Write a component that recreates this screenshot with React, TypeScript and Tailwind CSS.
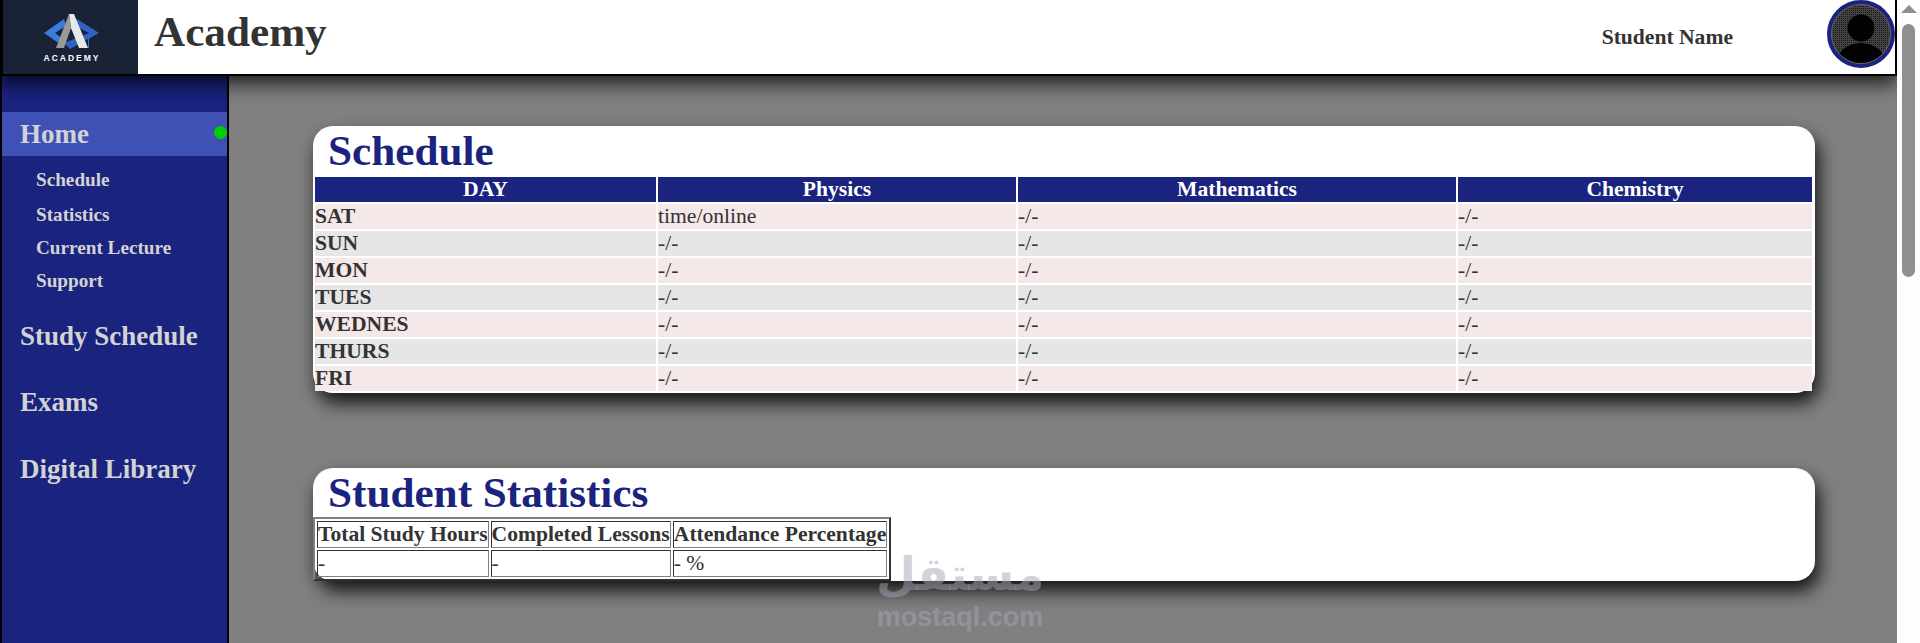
const rows = ["SAT", "SUN", "MON", "TUES", "WEDNES", "THURS", "FRI"]

function Logo() {
  return (
    <svg width="60" height="54" viewBox="0 0 60 54">
      <polygon points="3,23 23,9 25,16 14,23 22,29 19,34" fill="#3b7bdc" />
      <polygon points="36,9 58,23 29,39 23,33 48,23 34,16" fill="#2f62c4" />
      <polygon points="28,4 33,4 47,38 38,38 30,18" fill="#e8e8e8" />
      <polygon points="28,4 30,18 23,38 15,38" fill="#9a9a9a" />
      <rect x="47" y="26" width="1" height="12" fill="#3b6fd0" />
      <text x="31" y="51" textAnchor="middle" fill="#ffffff" fontSize="8.5" fontWeight="700" letterSpacing="2" fontFamily="'Liberation Sans', sans-serif">ACADEMY</text>
    </svg>
  )
}

function Avatar() {
  return (
    <svg width="68" height="68" viewBox="0 0 68 68" className="block">
      <defs>
        <pattern id="dots" width="2" height="2" patternUnits="userSpaceOnUse">
          <rect width="2" height="2" fill="#444444" />
          <rect width="1" height="1" fill="#161616" />
        </pattern>
        <clipPath id="round"><circle cx="34" cy="34" r="29" /></clipPath>
      </defs>
      <circle cx="34" cy="34" r="32" fill="url(#dots)" stroke="#1a237e" strokeWidth="4" />
      <circle cx="34" cy="34" r="29.5" fill="none" stroke="#666666" strokeWidth="1" />
      <g clipPath="url(#round)">
        <circle cx="34" cy="28" r="13.5" fill="#030303" />
        <ellipse cx="34" cy="64" rx="25" ry="21" fill="#030303" />
      </g>
    </svg>
  )
}

function Watermark() {
  return (
    <div className="absolute left-[876px] top-[546px] z-30 flex w-[168px] flex-col items-center text-[#a5a5b8]/50 pointer-events-none">
      <span className="h-[56px] text-[46px] leading-[56px] font-bold font-['DejaVu_Sans',sans-serif]" dir="rtl">مستقل</span>
      <span className="h-[30px] text-[27px] leading-[30px] font-bold font-['Liberation_Sans',sans-serif]">mostaql.com</span>
    </div>
  )
}

export default function App() {
  return (
    <div className="relative flex h-[643px] w-[1920px] overflow-hidden bg-[#fdfdfd] text-[#333] font-['Liberation_Serif',serif]">
      <div className="flex w-[1897px] flex-col">
        <header className="relative z-10 flex h-[76px] shrink-0 items-center border-b-2 border-r-2 border-l-[3px] border-black bg-white shadow-[0_8px_18px_rgba(0,0,0,0.75)]">
          <div className="flex h-[74px] w-[135px] items-center justify-center bg-[#1a2235]">
            <Logo />
          </div>
          <h1 className="ml-4 -mt-[10px] text-[43.2px] leading-none font-bold">Academy</h1>
          <div className="ml-auto mr-[94px] text-[21.6px] font-bold">Student Name</div>
          <div className="-mt-[6px]"><Avatar /></div>
        </header>

        <div className="flex min-h-0 flex-1">
          <nav className="w-[229px] shrink-0 border-x-2 border-black bg-[#1a237e] pt-[36px] font-bold text-[#d3d3d3]">
            <div className="relative flex h-[44px] items-center bg-[#3f51b5] pl-[18px] text-[27px]">
              Home
              <span className="absolute right-0 top-[14px] h-[13px] w-[13px] rounded-full bg-[#00d000]" />
            </div>
            <ul className="mt-[7px] pl-[34px] text-[19.2px] leading-[33px]">
              <li className="mb-[2px]">Schedule</li>
              <li>Statistics</li>
              <li>Current Lecture</li>
              <li>Support</li>
            </ul>
            <div className="mt-[23px] flex flex-col pl-[18px] text-[27px] leading-[32px]">
              <div>Study Schedule</div>
              <div className="mt-[34px]">Exams</div>
              <div className="mt-[35px]">Digital Library</div>
            </div>
          </nav>

          <main className="min-w-0 flex-1 bg-[#808080] pl-[84px] pt-[50px]">
            <section className="h-[267px] w-[1502px] rounded-[20px] bg-white shadow-[4px_10px_18px_rgba(0,0,0,0.85)]">
              <h2 className="h-[51px] pl-[15px] text-[43.2px] leading-[50px] font-bold text-[#1a237e]">Schedule</h2>
              <table className="ml-[2px] w-[1497px] table-fixed border-separate border-spacing-0 text-left text-[21.6px] leading-[25px]">
                <colgroup>
                  <col className="w-[343px]" />
                  <col className="w-[360px]" />
                  <col className="w-[440px]" />
                  <col />
                </colgroup>
                <thead>
                  <tr className="text-center text-white">
                    {["DAY", "Physics", "Mathematics", "Chemistry"].map((h, i) => (
                      <th key={h} className={`h-[25px] bg-[#1a237e] p-0 font-bold ${i < 3 ? "border-r-2 border-white" : ""}`}>{h}</th>
                    ))}
                  </tr>
                </thead>
                <tbody>
                  {rows.map((day, r) => {
                    const bg = r % 2 === 0 ? "bg-[#f5e8e8]" : "bg-[#e6e6e6]"
                    return (
                      <tr key={day}>
                        <th className={`h-[27px] border-t-2 border-r-2 border-white p-0 text-left font-bold ${bg}`}>{day}</th>
                        <td className={`h-[27px] border-t-2 border-r-2 border-white p-0 ${bg}`}>{r === 0 ? "time/online" : "-/-"}</td>
                        <td className={`h-[27px] border-t-2 border-r-2 border-white p-0 ${bg}`}>-/-</td>
                        <td className={`h-[27px] border-t-2 border-white p-0 ${bg}`}>-/-</td>
                      </tr>
                    )
                  })}
                </tbody>
              </table>
            </section>

            <section className="mt-[75px] h-[113px] w-[1502px] rounded-[20px] bg-white shadow-[4px_10px_18px_rgba(0,0,0,0.85)]">
              <h2 className="h-[49px] pl-[15px] text-[43.2px] leading-[50px] font-bold text-[#1a237e]">Student Statistics</h2>
              <table className="border-separate border-spacing-[2px] border-2 border-t-[#808080] border-l-[#808080] border-r-[#333] border-b-[#333] text-[21.6px] leading-[25px]">
                <tbody>
                  <tr>
                    {["Total Study Hours", "Completed Lessons", "Attendance Percentage"].map(h => (
                      <th key={h} className="h-[27px] border border-t-[#333] border-l-[#333] border-r-[#808080] border-b-[#808080] p-0 font-bold">{h}</th>
                    ))}
                  </tr>
                  <tr>
                    {["-", "-", "- %"].map((v, i) => (
                      <td key={i} className="h-[27px] border border-t-[#333] border-l-[#333] border-r-[#808080] border-b-[#808080] p-0">{v}</td>
                    ))}
                  </tr>
                </tbody>
              </table>
            </section>
          </main>
        </div>
      </div>

      <div className="relative z-20 w-[23px] shrink-0 bg-[#fdfdfd]">
        <div className="mx-auto mt-[5px] h-0 w-0 border-x-[8px] border-b-[8px] border-x-transparent border-b-[#8f8f8f]" />
        <div className="ml-[5px] mt-[11px] h-[253px] w-[13px] rounded-full bg-[#8f8f8f]" />
      </div>
      <Watermark />
    </div>
  )
}
